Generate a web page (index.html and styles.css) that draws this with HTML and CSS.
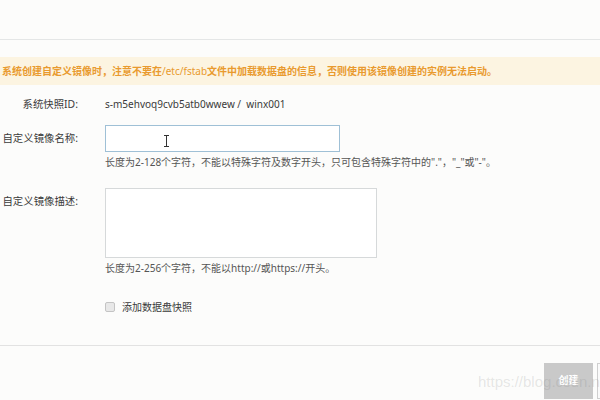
FILE: index.html
```html
<!DOCTYPE html>
<html lang="zh-CN">
<head>
<meta charset="utf-8">
<title>创建自定义镜像</title>
<link rel="stylesheet" href="styles.css">
</head>
<body>
<div class="top"></div>
<div class="warning">系统创建自定义镜像时，注意不要在<span class="thin">/etc/fstab</span>文件中加载数据盘的信息，否则使用该镜像创建的实例无法启动。</div>
<div class="form">
  <div class="label">系统快照ID:</div>
  <div class="value">s-m5ehvoq9cvb5atb0wwew /&nbsp; winx001</div>

  <div class="label mid">自定义镜像名称:</div>
  <div class="field">
    <div class="input-wrap">
      <input class="input" type="text">
      <svg class="ibeam" width="7" height="12" viewBox="0 0 7 12"><path d="M1 0.5h5M3.5 0.5v11M1 11.5h5" stroke="#333" stroke-width="1" fill="none"/></svg>
    </div>
    <div class="hint">长度为2-128个字符，不能以特殊字符及数字开头，只可包含特殊字符中的"."，"_"或"-"。</div>
  </div>

  <div class="label top-label">自定义镜像描述:</div>
  <div class="field gap-top">
    <textarea class="textarea"></textarea>
    <div class="hint">长度为2-256个字符，不能以http://或https://开头。</div>
  </div>

  <div class="label"></div>
  <label class="check">
    <span class="box"></span>
    <span>添加数据盘快照</span>
  </label>
</div>
<div class="footer">
  <button class="btn primary">创建</button>
  <button class="btn ghost" aria-label="取消"></button>
</div>
<div class="watermark">https://blog.csdn.net/qq</div>
</body>
</html>
```

FILE: styles.css
```css
html, body {
  margin: 0;
  padding: 0;
  overflow: hidden;
  height: 400px;
}
body {
  background: #fcfcfb;
  font-family: "Noto Sans", "Noto Sans CJK SC", sans-serif;
  font-size: 10px;
  color: #444;
  position: relative;
}
.top {
  height: 39px;
  border-bottom: 1px solid #e4e6e6;
}
.warning {
  margin-top: 17px;
  height: 28px;
  line-height: 28px;
  background: #fcf4e1;
  color: #e99a2e;
  font-weight: bold;
  padding-left: 2px;
  white-space: nowrap;
}
.warning .thin {
  font-weight: normal;
}
.form {
  display: grid;
  grid-template-columns: 78px 1fr;
  column-gap: 27px;
  margin-top: 12px;
  align-items: start;
}
.label {
  justify-self: end;
  white-space: nowrap;
  line-height: 14px;
  color: #3a3a3a;
  font-size: 10.4px;
}
.label.mid {
  margin-top: 20px;
}
.label.top-label {
  margin-top: 25px;
}
.value {
  line-height: 14px;
  color: #3a3a3a;
}
.field {
  margin-top: 14px;
}
.field.gap-top {
  margin-top: 19px;
}
.input-wrap {
  position: relative;
  width: 235px;
  height: 27px;
}
.input {
  box-sizing: border-box;
  width: 235px;
  height: 27px;
  border: 1px solid #9fc0d6;
  background: #fff;
  margin: 0;
  padding: 0 6px;
  outline: none;
  display: block;
}
.ibeam {
  position: absolute;
  left: 58px;
  top: 10px;
}
.textarea {
  box-sizing: border-box;
  display: block;
  width: 272px;
  height: 70px;
  border: 1px solid #d6d9da;
  background: #fff;
  margin: 0;
  resize: none;
  outline: none;
}
.hint {
  margin-top: 3px;
  line-height: 14px;
  color: #555;
  white-space: nowrap;
}
.check {
  margin-top: 25px;
  display: flex;
  align-items: center;
  gap: 7px;
  line-height: 14px;
  color: #3a3a3a;
}
.box {
  box-sizing: border-box;
  width: 10px;
  height: 10px;
  border: 1px solid #c4c4c4;
  border-radius: 2px;
  background: #e8e8e8;
}
.footer {
  margin-top: 31px;
  border-top: 1px solid #e2e2e2;
  padding-top: 17px;
  display: flex;
  justify-content: flex-end;
  gap: 4px;
  margin-right: -46px;
}
.btn {
  font-family: "Noto Sans CJK SC", sans-serif;
  font-size: 10px;
  width: 49px;
  height: 36px;
  margin: 0;
  padding: 0 0 4px;
  font-weight: bold;
}
.btn.primary {
  background: #c9c9c9;
  border: none;
  color: #fff;
}
.btn.ghost {
  background: #fafafa;
  border: 1px solid #cfcfcf;
}
.watermark {
  position: absolute;
  left: 478px;
  top: 373px;
  font-family: "Liberation Sans", sans-serif;
  font-size: 15px;
  color: rgba(120, 120, 120, 0.18);
  white-space: nowrap;
}
```
